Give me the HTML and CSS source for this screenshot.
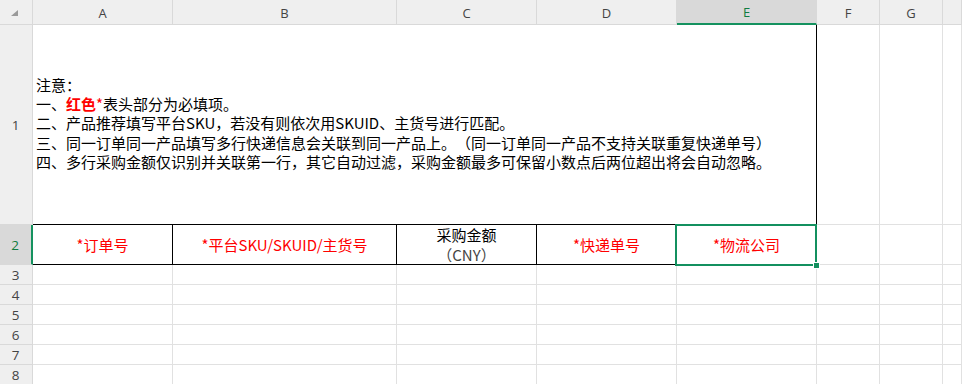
FILE: index.html
```html
<!DOCTYPE html>
<html lang="zh-CN">
<head>
<meta charset="utf-8">
<title>Sheet</title>
<link rel="stylesheet" href="styles.css">
</head>
<body>
<div class="sheet">
  <div class="hd corner"><span class="tri"></span></div>
  <div class="hd col">A</div>
  <div class="hd col">B</div>
  <div class="hd col">C</div>
  <div class="hd col">D</div>
  <div class="hd col sel-col">E</div>
  <div class="hd col">F</div>
  <div class="hd col">G</div>
  <div class="hd col"></div>

  <div class="hd row">1</div>
  <div class="cell note">
    <div class="note-text">
      <div>注意：</div>
      <div>一、<b class="red">红色</b><span class="red">*</span>表头部分为必填项。</div>
      <div>二、产品推荐填写平台SKU，若没有则依次用SKUID、主货号进行匹配。</div>
      <div>三、同一订单同一产品填写多行快递信息会关联到同一产品上。（同一订单同一产品不支持关联重复快递单号）</div>
      <div>四、多行采购金额仅识别并关联第一行，其它自动过滤，采购金额最多可保留小数点后两位超出将会自动忽略。</div>
    </div>
  </div>
  <div class="cell"></div>
  <div class="cell"></div>
  <div class="cell"></div>

  <div class="hd row sel-row">2</div>
  <div class="cell th red">*订单号</div>
  <div class="cell th red">*平台SKU/SKUID/主货号</div>
  <div class="cell th two"><span>采购金额</span><span class="cny"><span class="po">（</span>CNY<span class="pc">）</span></span></div>
  <div class="cell th red">*快递单号</div>
  <div class="cell th red active">*物流公司<span class="selbox"><span class="handle"></span></span></div>
  <div class="cell"></div>
  <div class="cell"></div>
  <div class="cell"></div>

  <div class="hd row">3</div>
  <div class="cell"></div><div class="cell"></div><div class="cell"></div><div class="cell"></div><div class="cell"></div><div class="cell"></div><div class="cell"></div><div class="cell"></div>
  <div class="hd row">4</div>
  <div class="cell"></div><div class="cell"></div><div class="cell"></div><div class="cell"></div><div class="cell"></div><div class="cell"></div><div class="cell"></div><div class="cell"></div>
  <div class="hd row">5</div>
  <div class="cell"></div><div class="cell"></div><div class="cell"></div><div class="cell"></div><div class="cell"></div><div class="cell"></div><div class="cell"></div><div class="cell"></div>
  <div class="hd row">6</div>
  <div class="cell"></div><div class="cell"></div><div class="cell"></div><div class="cell"></div><div class="cell"></div><div class="cell"></div><div class="cell"></div><div class="cell"></div>
  <div class="hd row">7</div>
  <div class="cell"></div><div class="cell"></div><div class="cell"></div><div class="cell"></div><div class="cell"></div><div class="cell"></div><div class="cell"></div><div class="cell"></div>
  <div class="hd row">8</div>
  <div class="cell"></div><div class="cell"></div><div class="cell"></div><div class="cell"></div><div class="cell"></div><div class="cell"></div><div class="cell"></div><div class="cell"></div>
</div>
</body>
</html>
```

FILE: styles.css
```css
* { box-sizing: border-box; }
html, body { margin: 0; padding: 0; background: #fff; overflow: hidden; }
body { width: 962px; height: 384px; }

.sheet {
  display: grid;
  grid-template-columns: 33px 140px 224px 140px 140px 140px 63px 63px 1fr;
  grid-template-rows: 25px 200px 40px repeat(6, 20px);
  width: 962px;
  font-family: "Noto Sans CJK SC", "Noto Sans", sans-serif;
  text-spacing-trim: space-all;
}

.cell {
  border-right: 1px solid #e1e1e1;
  border-bottom: 1px solid #e1e1e1;
  position: relative;
}

.hd {
  background: #efefef;
  border-right: 1px solid #d9d9d9;
  border-bottom: 1px solid #d9d9d9;
  font-family: "Open Sans", "Noto Sans", sans-serif;
  font-size: 13px;
  color: #444;
  display: flex;
  align-items: center;
  justify-content: center;
}
.hd.col { padding-top: 1px; }
.hd.row { padding-right: 1px; font-size: 13.5px; }

.corner { position: relative; }
.tri {
  width: 0; height: 0;
  border-left: 7px solid transparent;
  border-bottom: 6px solid #9a9a9a;
  margin: 1px 3px 0 0;
}

.sel-col {
  background: #d9d9d9;
  color: #107c41;
  border-bottom: 2px solid #15925f;
  padding-top: 2px;
}
.sel-row {
  background: #d9d9d9;
  color: #107c41;
  border-right: 2px solid #15925f;
}

.note {
  grid-column: span 5;
  border-right: 1px solid #000;
  border-bottom: 1px solid #000;
  display: flex;
  align-items: center;
  padding-left: 3px;
  font-size: 15px;
  line-height: 19.25px;
  color: #000;
  white-space: nowrap;
}
.note-text { margin-top: -3px; }
.note b { font-weight: 700; }
.red { color: #ff0000; }

.th {
  border-right: 1px solid #000;
  border-bottom: 1px solid #000;
  display: flex;
  align-items: center;
  justify-content: center;
  font-size: 15px;
  white-space: nowrap;
}
.two {
  flex-direction: column;
  line-height: 20px;
  color: #000;
}
.cny { color: #444; }
.po, .pc { display: inline-block; width: 15px; }
.po { text-align: right; }
.pc { text-align: left; }

.active { z-index: 2; }
.selbox {
  position: absolute;
  left: -2px;
  top: -1px;
  right: -1px;
  bottom: -2px;
  border: 2px solid #13905f;
}
.handle {
  position: absolute;
  right: -5px;
  bottom: -5px;
  width: 7px;
  height: 7px;
  background: #13905f;
  border: 1px solid #fff;
}
```
